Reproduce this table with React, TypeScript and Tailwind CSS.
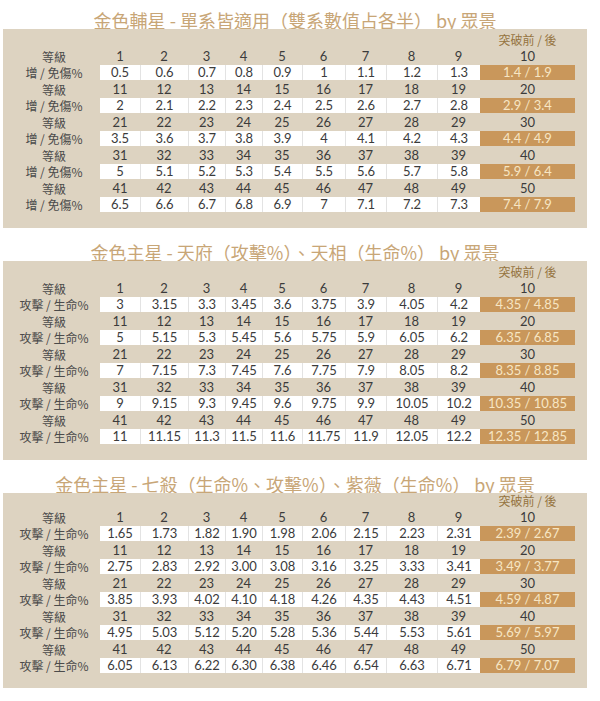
import React from "react";

const COLS = ["w-[40px]", "w-[48px]", "w-[37px]", "w-[37px]", "w-[40px]", "w-[43px]", "w-[41px]", "w-[51px]", "w-[43px]"];

type Group = { vals: string[]; brk: string };

function Table({ title, label, groups, tight }: { title: string; label: string; groups: Group[]; tight?: boolean }) {
  return (
    <div className="flex flex-col">
      <div className="h-[18px] flex items-center justify-center w-[590px] text-[18px] leading-[18px] text-[#c8a677] font-normal whitespace-nowrap font-['Noto_Sans_CJK_TC','Noto_Sans',sans-serif]">
        {title}
      </div>
      <div className={`ml-[3px] w-[584px] bg-[#ddd3c1] pl-[5px] pr-[12px] flex flex-col ${tight ? "pt-0 pb-[14px]" : "pt-[3px] pb-[15px]"}`}>
        <div className="h-[16px] flex justify-end">
          <div className="w-[95px] text-center text-[12px] leading-[16px] text-[#95743f] font-['Noto_Sans_CJK_TC','Noto_Sans',sans-serif]">
            突破前 / 後
          </div>
        </div>
        {groups.map((g, gi) => (
          <React.Fragment key={gi}>
            <div className="h-[17px] flex items-center text-[#3b3b3b] font-['Lato','Open_Sans',sans-serif]">
              <div className="w-[92px] text-center text-[12px] leading-[17px] text-[#4a4a4a] font-['Noto_Sans_CJK_TC','Noto_Sans',sans-serif]">
                等級
              </div>
              {COLS.map((c, i) => (
                <div key={i} className={`${c} text-center text-[13px] leading-[17px]`}>
                  {gi * 10 + i + 1}
                </div>
              ))}
              <div className="w-[95px] text-center text-[13px] leading-[17px]">{gi * 10 + 10}</div>
            </div>
            <div className="h-[16px] flex pb-[1px] text-[#3b3b3b] font-['Lato','Open_Sans',sans-serif]">
              <div className="w-[92px] text-center text-[12px] leading-[15px] text-[#4a4a4a] whitespace-nowrap font-['Noto_Sans_CJK_TC','Noto_Sans',sans-serif]">
                {label}
              </div>
              {g.vals.map((v, i) => (
                <div
                  key={i}
                  className={`${COLS[i]} h-[15px] bg-white text-center text-[13px] leading-[15px] ${i > 0 ? "border-l border-[#e3e3e3]" : ""}`}
                >
                  {v}
                </div>
              ))}
              <div className="w-[95px] h-[15px] bg-[#c9975b] text-center text-[13px] leading-[15px] text-[#f7e6c4]">
                {g.brk}
              </div>
            </div>
          </React.Fragment>
        ))}
      </div>
    </div>
  );
}

const t1: Group[] = [
  { vals: ["0.5", "0.6", "0.7", "0.8", "0.9", "1", "1.1", "1.2", "1.3"], brk: "1.4 / 1.9" },
  { vals: ["2", "2.1", "2.2", "2.3", "2.4", "2.5", "2.6", "2.7", "2.8"], brk: "2.9 / 3.4" },
  { vals: ["3.5", "3.6", "3.7", "3.8", "3.9", "4", "4.1", "4.2", "4.3"], brk: "4.4 / 4.9" },
  { vals: ["5", "5.1", "5.2", "5.3", "5.4", "5.5", "5.6", "5.7", "5.8"], brk: "5.9 / 6.4" },
  { vals: ["6.5", "6.6", "6.7", "6.8", "6.9", "7", "7.1", "7.2", "7.3"], brk: "7.4 / 7.9" },
];

const t2: Group[] = [
  { vals: ["3", "3.15", "3.3", "3.45", "3.6", "3.75", "3.9", "4.05", "4.2"], brk: "4.35 / 4.85" },
  { vals: ["5", "5.15", "5.3", "5.45", "5.6", "5.75", "5.9", "6.05", "6.2"], brk: "6.35 / 6.85" },
  { vals: ["7", "7.15", "7.3", "7.45", "7.6", "7.75", "7.9", "8.05", "8.2"], brk: "8.35 / 8.85" },
  { vals: ["9", "9.15", "9.3", "9.45", "9.6", "9.75", "9.9", "10.05", "10.2"], brk: "10.35 / 10.85" },
  { vals: ["11", "11.15", "11.3", "11.5", "11.6", "11.75", "11.9", "12.05", "12.2"], brk: "12.35 / 12.85" },
];

const t3: Group[] = [
  { vals: ["1.65", "1.73", "1.82", "1.90", "1.98", "2.06", "2.15", "2.23", "2.31"], brk: "2.39 / 2.67" },
  { vals: ["2.75", "2.83", "2.92", "3.00", "3.08", "3.16", "3.25", "3.33", "3.41"], brk: "3.49 / 3.77" },
  { vals: ["3.85", "3.93", "4.02", "4.10", "4.18", "4.26", "4.35", "4.43", "4.51"], brk: "4.59 / 4.87" },
  { vals: ["4.95", "5.03", "5.12", "5.20", "5.28", "5.36", "5.44", "5.53", "5.61"], brk: "5.69 / 5.97" },
  { vals: ["6.05", "6.13", "6.22", "6.30", "6.38", "6.46", "6.54", "6.63", "6.71"], brk: "6.79 / 7.07" },
];

export default function App() {
  return (
    <div className="w-[600px] h-[701px] bg-white overflow-hidden flex flex-col pt-[11px] gap-[15px]">
      <Table title="金色輔星 - 單系皆適用（雙系數值占各半） by 眾景" label="增 / 免傷%" groups={t1} />
      <Table title="金色主星 - 天府（攻擊%）、天相（生命%） by 眾景" label="攻擊 / 生命%" groups={t2} />
      <Table title="金色主星 - 七殺（生命%、攻擊%）、紫薇（生命%） by 眾景" label="攻擊 / 生命%" groups={t3} tight />
    </div>
  );
}
